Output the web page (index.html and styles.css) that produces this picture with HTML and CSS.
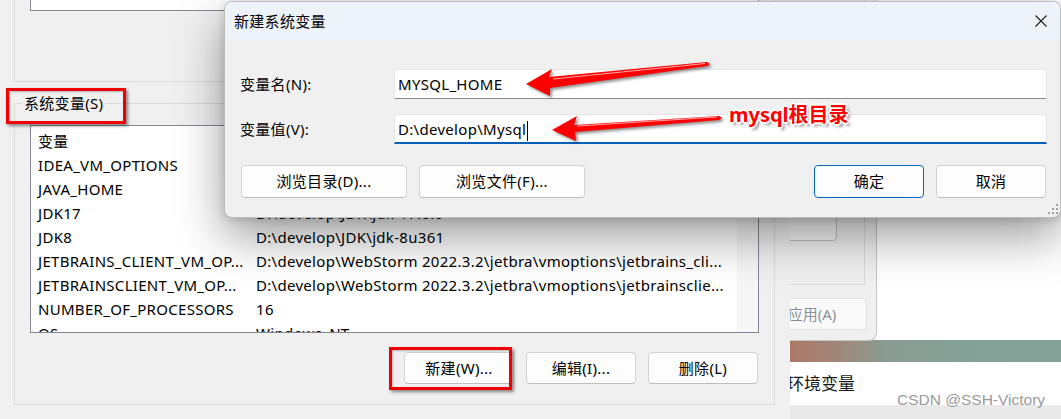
FILE: index.html
```html
<!DOCTYPE html>
<html lang="zh-CN">
<head>
<meta charset="utf-8">
<title>新建系统变量</title>
<link rel="stylesheet" href="styles.css">
</head>
<body>
<div class="desktop">
  <div class="win settings">
    <div class="settings-top"></div>
    <div class="banner"></div>
    <div class="settings-title">环境变量</div>
  </div>

  <div class="win sysprops">
    <div class="sp-group">
      <div class="sp-envbtn"></div>
    </div>
    <div class="sp-buttons"><div class="sp-btn">应用(A)</div></div>
  </div>

  <div class="win envwin">
    <div class="user-group">
      <div class="user-list"></div>
    </div>
    <div class="sys-group">
      <div class="legend">系统变量(S)</div>
      <div class="list">
        <div class="row"><span class="c1">变量</span><span class="c2"></span></div>
        <div class="row"><span class="c1">IDEA_VM_OPTIONS</span><span class="c2"></span></div>
        <div class="row"><span class="c1">JAVA_HOME</span><span class="c2"></span></div>
        <div class="row"><span class="c1">JDK17</span><span class="c2">D:\develop\JDK\jdk-17.0.6</span></div>
        <div class="row"><span class="c1">JDK8</span><span class="c2">D:\develop\JDK\jdk-8u361</span></div>
        <div class="row"><span class="c1">JETBRAINS_CLIENT_VM_OP...</span><span class="c2">D:\develop\WebStorm 2022.3.2\jetbra\vmoptions\jetbrains_cli...</span></div>
        <div class="row"><span class="c1">JETBRAINSCLIENT_VM_OP...</span><span class="c2">D:\develop\WebStorm 2022.3.2\jetbra\vmoptions\jetbrainsclie...</span></div>
        <div class="row"><span class="c1">NUMBER_OF_PROCESSORS</span><span class="c2">16</span></div>
        <div class="row"><span class="c1">OS</span><span class="c2">Windows_NT</span></div>
        <div class="scrollbar"><div class="thumb"></div></div>
      </div>
      <div class="btn-row">
        <div class="btn">新建(W)...</div>
        <div class="btn">编辑(I)...</div>
        <div class="btn">删除(L)</div>
      </div>
    </div>
  </div>

  <div class="dialog">
    <div class="titlebar">
      <span class="title">新建系统变量</span>
      <svg class="close" width="12" height="12" viewBox="0 0 12 12"><path d="M0.5 0.5 L11.5 11.5 M11.5 0.5 L0.5 11.5" stroke="#1b1b1b" stroke-width="1.1" fill="none"/></svg>
    </div>
    <div class="dlg-body">
      <div class="form">
        <label class="lbl">变量名(N):</label>
        <div class="input">MYSQL_HOME</div>
        <label class="lbl">变量值(V):</label>
        <div class="input focused">D:\develop\Mysql<span class="caret"></span></div>
      </div>
      <div class="dlg-buttons">
        <div class="dbtn wide">浏览目录(D)...</div>
        <div class="dbtn wide">浏览文件(F)...</div>
        <div class="spacer"></div>
        <div class="dbtn default">确定</div>
        <div class="dbtn">取消</div>
      </div>
    </div>
    <svg class="grip" width="12" height="12" viewBox="0 0 12 12">
      <rect x="10" y="0" width="2" height="2" fill="#a3a3a3"/>
      <rect x="6" y="4" width="2" height="2" fill="#a3a3a3"/>
      <rect x="10" y="4" width="2" height="2" fill="#a3a3a3"/>
      <rect x="2" y="8" width="2" height="2" fill="#a3a3a3"/>
      <rect x="6" y="8" width="2" height="2" fill="#a3a3a3"/>
      <rect x="10" y="8" width="2" height="2" fill="#a3a3a3"/>
    </svg>
  </div>

  <svg class="arrows" width="1061" height="419" viewBox="0 0 1061 419">
    <polygon points="526,84 552,69 549,77 707,62 710,64 707,66 550,88 550,96" fill="#ff0000"/>
    <polyline points="553,79 705,63.5" stroke="#ffd0d0" stroke-width="1.2" fill="none" opacity="0.8"/>
    <polygon points="552,130 577,116 574,125 719,116 722,118 719,120 575,132 576,141" fill="#ff0000"/>
    <polyline points="577,126 717,117" stroke="#ffd0d0" stroke-width="1.2" fill="none" opacity="0.8"/>
  </svg>
  <div class="note">mysql根目录</div>

  <div class="mark mark-legend"></div>
  <div class="mark mark-new"></div>

  <div class="watermark">CSDN @SSH-Victory</div>
</div>
</body>
</html>
```

FILE: styles.css
```css
* { box-sizing: border-box; }

html, body {
  margin: 0;
  padding: 0;
}

body {
  font-family: "Noto Sans", "Noto Sans CJK SC", sans-serif;
  font-size: 15px;
  letter-spacing: 0.3px;
  color: #000;
}

.desktop {
  position: relative;
  width: 1061px;
  height: 419px;
  overflow: hidden;
  background: #e9e9e9;
}

.win {
  position: absolute;
}

/* Settings app behind */
.settings {
  left: 700px;
  top: 0;
  width: 361px;
  height: 405px;
  background: #fff;
  display: flex;
  flex-direction: column;
}

.settings-top {
  height: 340px;
}

.banner {
  height: 22px;
  background: linear-gradient(90deg, #b06a58 0%, #b07462 22%, #a0877a 38%, #8a9c92 52%, #84a197 75%, #86a198 100%);
}

.settings-title {
  height: 43px;
  line-height: 43px;
  padding-left: 87px;
  font-size: 17px;
  letter-spacing: 0;
  color: #1a1a1a;
}

/* System properties window */
.sysprops {
  left: 700px;
  top: 0;
  width: 177px;
  height: 341px;
  background: #f0f0f0;
  border-right: 1px solid #c4c4c4;
  border-bottom: 1px solid #c4c4c4;
  border-radius: 0 0 8px 0;
  display: flex;
  flex-direction: column;
  align-items: flex-end;
}

.sp-group {
  width: 150px;
  height: 285px;
  margin-right: 11px;
  border-right: 1px solid #d9d9d9;
  border-bottom: 1px solid #d9d9d9;
  display: flex;
  flex-direction: column;
  align-items: flex-end;
}

.sp-envbtn {
  width: 110px;
  height: 40px;
  margin-top: 201px;
  margin-right: 27px;
  border: 1px solid #c2c2c2;
  border-radius: 0 0 4px 4px;
  background: #f5f5f5;
}

.sp-buttons {
  margin-top: 13px;
  margin-right: 9px;
}

.sp-btn {
  width: 110px;
  height: 32px;
  line-height: 30px;
  text-align: center;
  border: 1px solid #e3e3e3;
  border-radius: 4px;
  background: #f9f9f9;
  color: #8a9098;
  letter-spacing: 0;
}

/* Environment variables window */
.envwin {
  left: 0;
  top: 0;
  width: 790px;
  height: 419px;
  background: #f0f0f0;
  padding: 0 15px 0 14px;
}

.user-group {
  height: 82px;
  border-left: 1px solid #dadada;
  border-right: 1px solid #dadada;
  border-bottom: 1px solid #dadada;
  padding-left: 15px;
}

.user-list {
  width: 729px;
  height: 11px;
  background: #fff;
  border-left: 1px solid #828790;
  border-right: 1px solid #828790;
  border-bottom: 1px solid #828790;
}

.sys-group {
  position: relative;
  margin-top: 21px;
  height: 302px;
  border: 1px solid #dadada;
  padding: 21px 15px 0 15px;
}

.legend {
  position: absolute;
  top: -11px;
  left: 7px;
  padding: 0 2px;
  line-height: 20px;
  background: #f0f0f0;
}

.list {
  position: relative;
  width: 729px;
  height: 208px;
  background: #fff;
  border: 1px solid #828790;
  padding-top: 3px;
  overflow: hidden;
}

.row {
  display: flex;
  height: 24px;
  line-height: 24px;
  padding-left: 7px;
  white-space: nowrap;
}

.c1 {
  width: 218px;
  flex: none;
}

.c2 {
  flex: none;
}

.scrollbar {
  position: absolute;
  top: 0;
  right: 0;
  bottom: 0;
  width: 21px;
  background: #f6f6f6;
}

.thumb {
  margin-top: 14px;
  margin-left: 6px;
  width: 6px;
  height: 77px;
  border-radius: 3px;
  background: #858585;
}

.btn-row {
  display: flex;
  justify-content: flex-end;
  gap: 12px;
  margin-top: 19px;
  padding-right: 1px;
}

.btn {
  width: 110px;
  height: 32px;
  line-height: 30px;
  text-align: center;
  background: #fdfdfd;
  border: 1px solid #d2d2d2;
  border-bottom-color: #bdbdbd;
  border-radius: 4px;
}

/* Dialog */
.dialog {
  position: absolute;
  left: 224px;
  top: 1px;
  width: 837px;
  height: 217px;
  background: #f0f0f0;
  border: 1px solid #bcbcbc;
  border-radius: 8px;
  overflow: hidden;
  box-shadow: 0 18px 48px rgba(0, 0, 0, 0.4), 0 2px 8px rgba(0, 0, 0, 0.14);
}

.titlebar {
  height: 38px;
  background: #eef2f9;
  display: flex;
  align-items: center;
  padding: 0 13px 0 9px;
}

.title {
  flex: 1;
  line-height: 20px;
}

.dlg-body {
  padding: 29px 13px 0 15px;
}

.form {
  display: grid;
  grid-template-columns: 154px 1fr;
  row-gap: 15px;
  align-items: center;
}

.lbl {
  line-height: 20px;
}

.input {
  height: 30px;
  line-height: 29px;
  padding-left: 3px;
  background: #fff;
  border: 1px solid #e6e6e6;
  border-bottom: 1px solid #8a8a8a;
  border-radius: 3px 3px 0 0;
}

.input.focused {
  border-bottom: 2px solid #005fb8;
  line-height: 28px;
}

.caret {
  display: inline-block;
  width: 1px;
  height: 20px;
  background: #000;
  vertical-align: middle;
  margin-left: 1px;
}

.dlg-buttons {
  display: flex;
  gap: 12px;
  margin-top: 21px;
  padding-left: 1px;
  padding-right: 1px;
}

.spacer {
  flex: 1;
}

.dbtn {
  width: 110px;
  height: 33px;
  line-height: 31px;
  text-align: center;
  background: #fdfdfd;
  border: 1px solid #d2d2d2;
  border-bottom-color: #bdbdbd;
  border-radius: 4px;
}

.dbtn.wide {
  width: 166px;
}

.dbtn.default {
  border: 1px solid #0067c0;
}

.grip {
  position: absolute;
  right: 2px;
  bottom: 1px;
}

/* Annotations */
.arrows {
  position: absolute;
  left: 0;
  top: 0;
  pointer-events: none;
  filter: drop-shadow(2px 2px 1.5px rgba(0, 0, 0, 0.45));
}

.note {
  position: absolute;
  left: 729px;
  top: 101px;
  font-family: "Noto Sans", "Noto Sans CJK SC", sans-serif;
  font-weight: bold;
  font-size: 20px;
  line-height: 28px;
  letter-spacing: 0;
  color: #ff0000;
  text-shadow:
    -2px 0 0 #fff, 2px 0 0 #fff, 0 -2px 0 #fff, 0 2px 0 #fff,
    -1px -1px 0 #fff, 1px -1px 0 #fff, -1px 1px 0 #fff, 1px 1px 0 #fff,
    3px 3px 3px rgba(0, 0, 0, 0.45);
}

.mark {
  position: absolute;
  border: 3px solid #f00000;
  box-shadow: 2px 2px 3px rgba(0, 0, 0, 0.45), inset 1px 1px 2px rgba(0, 0, 0, 0.25);
}

.mark-legend {
  left: 6px;
  top: 88px;
  width: 120px;
  height: 36px;
}

.mark-new {
  left: 389px;
  top: 347px;
  width: 123px;
  height: 43px;
}

.watermark {
  position: absolute;
  left: 897px;
  top: 390px;
  font-family: "Liberation Sans", Arial, sans-serif;
  font-size: 15.5px;
  line-height: 20px;
  letter-spacing: 0;
  color: #9a9a9a;
  white-space: nowrap;
}
```
